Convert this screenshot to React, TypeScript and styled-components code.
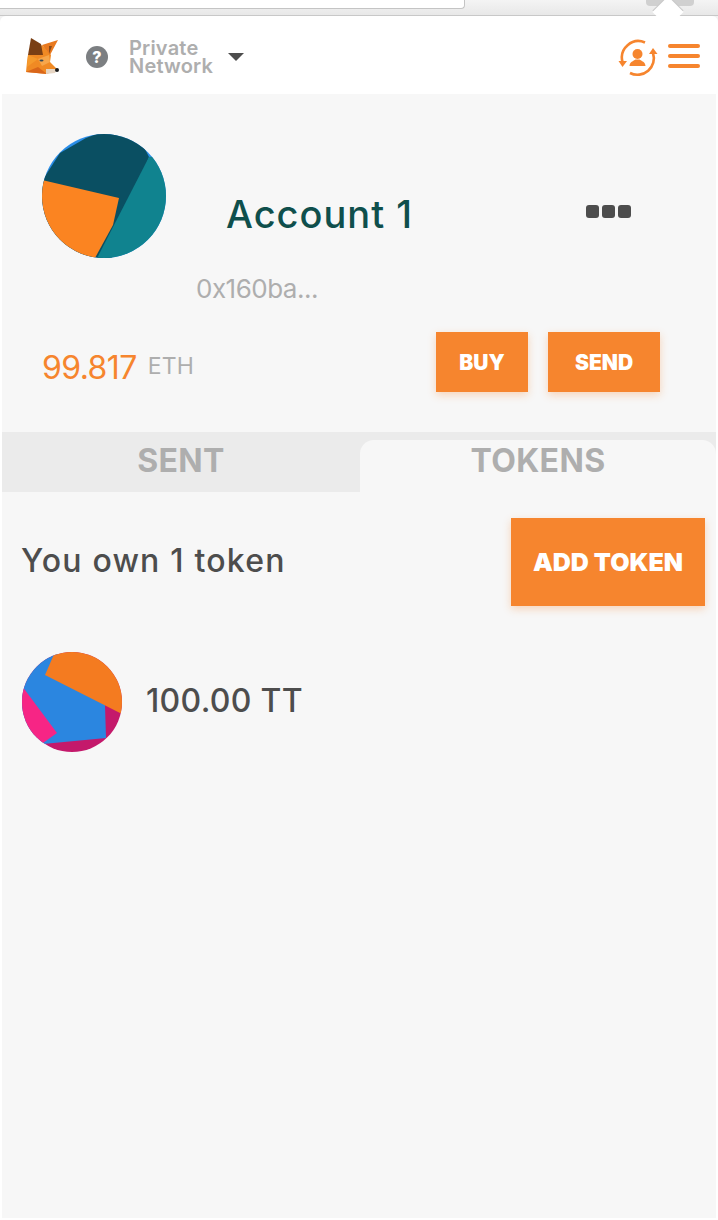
import React from 'react';
import styled, { createGlobalStyle } from 'styled-components';

const GlobalStyle = createGlobalStyle`
  html, body {
    margin: 0;
    padding: 0;
    background: #ffffff;
  }
  * {
    box-sizing: border-box;
  }
`;

const ORANGE = '#f6852e';

const Page = styled.div`
  width: 718px;
  height: 1220px;
  overflow: hidden;
  font-family: "Inter", "Liberation Sans", sans-serif;
  background: #f2f2f2;
  display: flex;
  flex-direction: column;
`;

const BrowserBar = styled.div`
  position: relative;
  height: 16px;
  flex: none;
  background: linear-gradient(#f4f4f4, #e8e8e8);
  border-bottom: 1px solid #c8c8c8;
`;

const AddressField = styled.div`
  width: 465px;
  height: 9px;
  background: #ffffff;
  border: 1px solid #c4c4c4;
  border-top: none;
  border-left: none;
  border-bottom-right-radius: 4px;
`;

const ExtensionTab = styled.div`
  position: absolute;
  top: 0;
  left: 646px;
  width: 48px;
  height: 6px;
  background: #d0d0d0;
  border-radius: 0 0 4px 4px;
`;

const PopupCaret = styled.div`
  position: absolute;
  top: 1px;
  left: 657px;
  width: 22px;
  height: 22px;
  background: #ffffff;
  transform: rotate(45deg);
  box-shadow: -1px -1px 0 #c8c8c8;
`;

const Popup = styled.div`
  position: relative;
  flex: 1;
  display: flex;
  flex-direction: column;
  background: #ffffff;
  border-radius: 6px 6px 0 0;
  padding: 0 2px 2px 2px;
`;

const Header = styled.header`
  height: 78px;
  flex: none;
  display: flex;
  align-items: center;
  padding: 4px 16px 0 23px;
`;

const Help = styled.span`
  width: 22px;
  height: 22px;
  margin-left: 25px;
  border-radius: 50%;
  background: #7c7f82;
  color: #ffffff;
  font-size: 16px;
  font-weight: 800;
  line-height: 22px;
  text-align: center;
`;

const NetworkName = styled.div`
  margin-left: 21px;
  width: 99px;
  color: #aeaeae;
  font-size: 20px;
  font-weight: 600;
  line-height: 18px;
  letter-spacing: 0.2px;
`;

const Dropdown = styled.span`
  width: 0;
  height: 0;
  border-left: 8px solid transparent;
  border-right: 8px solid transparent;
  border-top: 8px solid #4d4d4d;
`;

const HeaderActions = styled.div`
  margin-left: auto;
  display: flex;
  align-items: center;
  gap: 10px;
`;

const SyncSlot = styled.div`
  display: flex;
  margin-top: 1px;
`;

const Hamburger = styled.div`
  width: 32px;
  margin-bottom: 2px;
  display: flex;
  flex-direction: column;
  gap: 6px;
  span {
    height: 4px;
    border-radius: 2px;
    background: ${ORANGE};
  }
`;

const Body = styled.main`
  flex: 1;
  display: flex;
  flex-direction: column;
  background: #f7f7f7;
`;

const AccountPanel = styled.section`
  height: 338px;
  flex: none;
  padding: 40px 56px 0 40px;
`;

const AccountTop = styled.div`
  display: flex;
  align-items: center;
`;

const AccountName = styled.h1`
  margin: 36px 0 0 60px;
  color: #0f4f4c;
  font-size: 38px;
  font-weight: 500;
  line-height: 44px;
  letter-spacing: 1px;
`;

const MoreDots = styled.div`
  margin: 30px 29px 0 auto;
  display: flex;
  gap: 3px;
  span {
    width: 13px;
    height: 13px;
    border-radius: 3px;
    background: #4d4d4d;
  }
`;

const Address = styled.div`
  margin: 15px 0 0 154px;
  color: #aeaeae;
  font-size: 26px;
  line-height: 32px;
  letter-spacing: -0.5px;
`;

const BalanceRow = styled.div`
  margin-top: 27px;
  height: 60px;
  display: flex;
  align-items: center;
`;

const BalanceText = styled.div`
  display: flex;
  align-items: center;
  margin-top: 10px;
`;

const Balance = styled.span`
  color: ${ORANGE};
  font-size: 32px;
  letter-spacing: -0.6px;
`;

const Unit = styled.span`
  margin: 0 0 2px 11px;
  color: #aeaeae;
  font-size: 23px;
  letter-spacing: 0.2px;
`;

const OrangeButton = styled.button<{ $width: number; $height: number; $size: number }>`
  width: ${(p) => p.$width}px;
  height: ${(p) => p.$height}px;
  padding: 0;
  border: none;
  background: ${ORANGE};
  color: #ffffff;
  font-family: inherit;
  font-size: ${(p) => p.$size}px;
  font-weight: 900;
  box-shadow: 0 3px 8px rgba(247, 134, 47, 0.3);
`;

const Buttons = styled.div`
  margin-left: auto;
  display: flex;
  gap: 20px;
`;

const Tabs = styled.nav`
  height: 60px;
  flex: none;
  padding: 8px 0 0 0;
  display: grid;
  grid-template-columns: 358px 356px;
  background: #ebebeb;
`;

const Tab = styled.div<{ $active?: boolean }>`
  color: #aeaeae;
  background: ${(p) => (p.$active ? '#f7f7f7' : 'transparent')};
  border-radius: ${(p) => (p.$active ? '14px 14px 0 0' : '0')};
  font-size: 32px;
  font-weight: 700;
  line-height: 42px;
  letter-spacing: 0.4px;
  text-align: center;
`;

const TokensPanel = styled.section`
  flex: 1;
  padding: 26px 11px 0 20px;
`;

const TokensHead = styled.div`
  height: 88px;
  display: flex;
  align-items: center;
  justify-content: space-between;
`;

const OwnCount = styled.span`
  margin: 0 0 4px -1px;
  color: #4d4d4d;
  font-size: 32px;
  font-weight: 500;
  letter-spacing: 1.2px;
`;

const TokenRow = styled.div`
  margin-top: 46px;
  display: flex;
  align-items: center;
  gap: 24px;
`;

const TokenAmount = styled.span`
  margin-bottom: 4px;
  color: #4d4d4d;
  font-size: 32px;
  font-weight: 500;
  letter-spacing: 0.3px;
`;

const Fox = () => (
  <svg width="36" height="38" viewBox="0 0 36 38">
    <polygon points="3,17 17,7 26,17 25,24 32,31 22,36 1,34 2,24" fill="#f08a24" />
    <polygon points="17,7 33,2 25,17" fill="#e8791f" />
    <polygon points="24,8 27,8 24,16" fill="#8a4a18" />
    <polygon points="6,0 16,6 18,17 3,17" fill="#7a3f14" />
    <polygon points="3,17 13,21 2,29" fill="#f59a2c" />
    <polygon points="13,21 24,17 25,24 17,28" fill="#f7a64a" />
    <polygon points="1,34 13,29 22,36" fill="#d9661a" />
    <polygon points="21,31 32,31 30,35 21,36" fill="#e6d5c3" />
    <circle cx="32" cy="32" r="2" fill="#1c1c1c" />
    <ellipse cx="16.5" cy="22.5" rx="2" ry="1" fill="#3a4a55" />
  </svg>
);

const SyncIcon = () => (
  <svg width="40" height="40" viewBox="0 0 40 40" fill="none" stroke={ORANGE} strokeWidth="2.6">
    <path d="M4.5 24A16.5 16.5 0 0 1 27 4.5" />
    <path d="M35 15A16.5 16.5 0 0 1 12 35" />
    <polygon points="0.5,23 9,23 4.5,29" fill={ORANGE} stroke="none" />
    <polygon points="31,16 39.5,16 35,10" fill={ORANGE} stroke="none" />
    <circle cx="19.5" cy="16" r="5" fill={ORANGE} stroke="none" />
    <path d="M11.5 28c0-4 4-5 6-6.500h4c2 1.500 6 2.500 6 6.500z" fill={ORANGE} stroke="none" />
  </svg>
);

const AccountIdenticon = () => (
  <svg width="124" height="124" viewBox="0 0 124 124">
    <defs>
      <clipPath id="account-clip">
        <circle cx="62" cy="62" r="62" />
      </clipPath>
    </defs>
    <g clipPath="url(#account-clip)">
      <rect width="124" height="124" fill="#2a8de8" />
      <polygon points="0,47 18,19 44,4 60,-2 90,-2 103,15 107,23 70,124 0,124" fill="#0a4f62" />
      <polygon points="107,23 130,21 130,130 52,130" fill="#10838f" />
      <polygon points="0,46 77,64 71,91 53,124 0,128" fill="#fb8421" />
    </g>
  </svg>
);

const TokenIdenticon = () => (
  <svg width="100" height="100" viewBox="0 0 100 100">
    <defs>
      <clipPath id="token-clip">
        <circle cx="50" cy="50" r="50" />
      </clipPath>
    </defs>
    <g clipPath="url(#token-clip)">
      <rect width="100" height="100" fill="#c4196b" />
      <polygon points="-2,0 34,0 83,53 84,86 21,92 -2,90" fill="#2b86e0" />
      <polygon points="0,34 35,81 21,91 0,91" fill="#f72585" />
      <polygon points="33,0 100,0 100,62 23,23" fill="#f47b20" />
    </g>
  </svg>
);

const App = () => (
  <Page>
    <GlobalStyle />
    <BrowserBar>
      <AddressField />
      <ExtensionTab />
      <PopupCaret />
    </BrowserBar>
    <Popup>
      <Header>
        <Fox />
        <Help>?</Help>
        <NetworkName>
          Private
          <br />
          Network
        </NetworkName>
        <Dropdown />
        <HeaderActions>
          <SyncSlot>
            <SyncIcon />
          </SyncSlot>
          <Hamburger>
            <span />
            <span />
            <span />
          </Hamburger>
        </HeaderActions>
      </Header>
      <Body>
        <AccountPanel>
          <AccountTop>
            <AccountIdenticon />
            <AccountName>Account 1</AccountName>
            <MoreDots>
              <span />
              <span />
              <span />
            </MoreDots>
          </AccountTop>
          <Address>0x160ba...</Address>
          <BalanceRow>
            <BalanceText>
              <Balance>99.817</Balance>
              <Unit>ETH</Unit>
            </BalanceText>
            <Buttons>
              <OrangeButton $width={92} $height={60} $size={21}>BUY</OrangeButton>
              <OrangeButton $width={112} $height={60} $size={21}>SEND</OrangeButton>
            </Buttons>
          </BalanceRow>
        </AccountPanel>
        <Tabs>
          <Tab>SENT</Tab>
          <Tab $active>TOKENS</Tab>
        </Tabs>
        <TokensPanel>
          <TokensHead>
            <OwnCount>You own 1 token</OwnCount>
            <OrangeButton $width={194} $height={88} $size={25}>ADD TOKEN</OrangeButton>
          </TokensHead>
          <TokenRow>
            <TokenIdenticon />
            <TokenAmount>100.00 TT</TokenAmount>
          </TokenRow>
        </TokensPanel>
      </Body>
    </Popup>
  </Page>
);

export default App;
